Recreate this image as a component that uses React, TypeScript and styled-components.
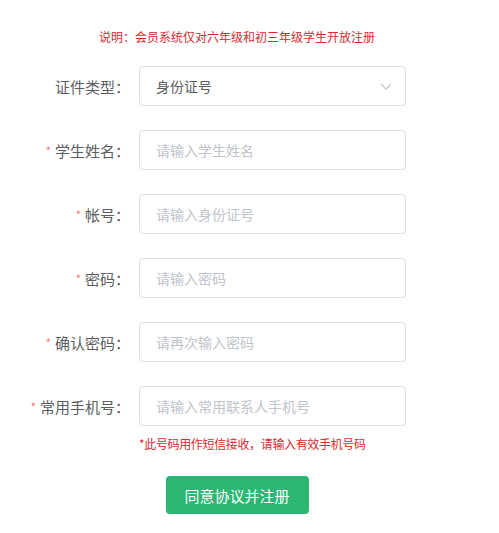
import React from "react";
import styled, { createGlobalStyle } from "styled-components";

const GlobalStyle = createGlobalStyle`
  body {
    margin: 0;
    background: #ffffff;
    font-family: "Noto Sans CJK SC", "Noto Sans", sans-serif;
  }
`;

const Page = styled.div`
  width: 474px;
  padding-top: 27px;
  display: flex;
  flex-direction: column;
`;

const Notice = styled.p`
  margin: 0 0 19px;
  text-align: center;
  font-size: 12px;
  line-height: 20px;
  color: #d52a30;
`;

const Form = styled.form`
  display: flex;
  flex-direction: column;
  gap: 24px;
`;

const Row = styled.div`
  display: grid;
  grid-template-columns: 130px 267px;
  column-gap: 9px;
  align-items: center;
  height: 40px;
`;

const Label = styled.label`
  text-align: right;
  font-size: 15px;
  color: #5a5d61;
  white-space: nowrap;
`;

const Star = styled.span`
  color: #f56c6c;
  font-size: 11px;
  margin-right: 4px;
  vertical-align: 2px;
`;

const Field = styled.input`
  box-sizing: border-box;
  width: 100%;
  height: 40px;
  padding: 0 16px;
  border: 1px solid #dcdfe6;
  border-radius: 4px;
  font-family: inherit;
  font-size: 14px;
  color: #606266;
  outline: none;

  &::placeholder {
    color: #c0c4cc;
  }
`;

const SelectBox = styled.div`
  box-sizing: border-box;
  height: 40px;
  padding: 0 13px 0 16px;
  border: 1px solid #dcdfe6;
  border-radius: 4px;
  display: flex;
  align-items: center;
  justify-content: space-between;
  font-size: 14px;
  color: #5a5d61;
  cursor: pointer;
`;

const Hint = styled.p`
  margin: 9px 0 0 139px;
  font-size: 12px;
  letter-spacing: -0.35px;
  line-height: 18px;
  color: #d52a30;
`;

const SubmitButton = styled.button`
  margin: 23px auto 0;
  width: 143px;
  height: 38px;
  border: none;
  border-radius: 4px;
  background: #2bb673;
  color: #ffffff;
  font-family: inherit;
  font-size: 15px;
  cursor: pointer;
`;

function Chevron() {
  return (
    <svg width="12" height="7" viewBox="0 0 12 7" fill="none">
      <path d="M1 1l5 5 5-5" stroke="#c0c4cc" strokeWidth="1.1" />
    </svg>
  );
}

const fields = [
  { label: "学生姓名", placeholder: "请输入学生姓名", type: "text" },
  { label: "帐号", placeholder: "请输入身份证号", type: "text" },
  { label: "密码", placeholder: "请输入密码", type: "password" },
  { label: "确认密码", placeholder: "请再次输入密码", type: "password" },
  { label: "常用手机号", placeholder: "请输入常用联系人手机号", type: "tel" },
];

export default function App() {
  return (
    <Page>
      <GlobalStyle />
      <Notice>说明：会员系统仅对六年级和初三年级学生开放注册</Notice>
      <Form onSubmit={(e) => e.preventDefault()}>
        <Row>
          <Label>证件类型：</Label>
          <SelectBox>
            <span>身份证号</span>
            <Chevron />
          </SelectBox>
        </Row>
        {fields.map((f) => (
          <Row key={f.label}>
            <Label>
              <Star>*</Star>
              {f.label}：
            </Label>
            <Field type={f.type} placeholder={f.placeholder} />
          </Row>
        ))}
      </Form>
      <Hint>*此号码用作短信接收，请输入有效手机号码</Hint>
      <SubmitButton type="button">同意协议并注册</SubmitButton>
    </Page>
  );
}
